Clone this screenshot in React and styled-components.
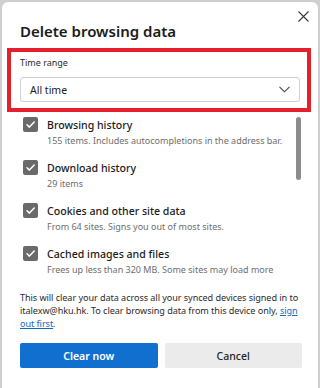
import React from 'react';
import styled, { createGlobalStyle } from 'styled-components';

const GlobalStyle = createGlobalStyle`
    html, body {
        margin: 0;
        padding: 0;
        background: #cfcfcf;
        font-family: "Noto Sans", "Liberation Sans", sans-serif;
    }
`;

const Dialog = styled.div`
    position: relative;
    box-sizing: border-box;
    width: 316px;
    height: 386px;
    margin: 2px 2px 0 2px;
    background: #ffffff;
    border-radius: 6px 6px 0 0;
    display: flex;
    flex-direction: column;
    color: #1b1b1b;
`;

const Header = styled.div`
    display: flex;
    justify-content: space-between;
    align-items: flex-start;
    padding: 0 7px 0 18px;
`;

const Title = styled.h1`
    margin: 18px 0 0 0;
    font-size: 15px;
    line-height: 22px;
    font-weight: 600;
    color: #1b1b1b;
`;

const CloseButton = styled.button`
    border: none;
    background: none;
    padding: 0;
    margin-top: 6px;
    width: 16px;
    height: 16px;
    display: flex;
    align-items: center;
    justify-content: center;
`;

const Highlight = styled.div`
    margin: 6px 7px 0 5px;
    border: 4px solid #e3202b;
    padding: 4px 7px 6px 9px;
    display: flex;
    flex-direction: column;
    gap: 7px;
`;

const FieldLabel = styled.div`
    font-size: 9px;
    line-height: 14px;
    color: #2a2a2a;
`;

const Select = styled.div`
    box-sizing: border-box;
    height: 25px;
    border: 1px solid #d1d1d1;
    border-radius: 3px;
    display: flex;
    align-items: center;
    justify-content: space-between;
    padding: 0 9px 0 9px;
    font-size: 10.5px;
    color: #1b1b1b;
`;

const ListArea = styled.div`
    position: relative;
    height: 171px;
    overflow: hidden;
    padding: 5px 0 0 21px;
    box-sizing: border-box;
    display: flex;
    flex-direction: column;
    gap: 12px;
`;

const Row = styled.div`
    display: flex;
    gap: 9px;
`;

const Box = styled.span`
    flex: none;
    width: 15px;
    height: 15px;
    border-radius: 2px;
    background: #6a6a6a;
    display: flex;
    align-items: center;
    justify-content: center;
`;

const RowText = styled.div`
    display: flex;
    flex-direction: column;
`;

const RowTitle = styled.div`
    font-size: 10.6px;
    line-height: 16px;
    font-weight: 500;
    color: #1b1b1b;
`;

const RowSub = styled.div`
    font-size: 9px;
    line-height: 15px;
    color: #6e6e6e;
    white-space: nowrap;
`;

const Thumb = styled.div`
    position: absolute;
    right: 17px;
    top: 5px;
    width: 5px;
    height: 63px;
    border-radius: 3px;
    background: #8c8c8c;
`;

const Notice = styled.p`
    margin: 8px 10px 0 18px;
    font-size: 9.1px;
    line-height: 13px;
    letter-spacing: -0.06px;
    white-space: nowrap;
    color: #2b2b2b;
`;

const Link = styled.a`
    color: #0f6cbd;
    text-decoration: underline;
`;

const Buttons = styled.div`
    display: grid;
    grid-template-columns: 1fr 1fr;
    gap: 7px;
    margin: 13px 16px 0 18px;
`;

const Button = styled.button`
    height: 25px;
    border: none;
    border-radius: 2px;
    font-family: inherit;
    font-size: 10.5px;
    background: ${p => p.$primary ? '#1170cf' : '#ebebeb'};
    color: ${p => p.$primary ? '#ffffff' : '#242424'};
    font-weight: ${p => p.$primary ? 600 : 500};
`;

const items = [
    { title: 'Browsing history', sub: '155 items. Includes autocompletions in the address bar.' },
    { title: 'Download history', sub: '29 items' },
    { title: 'Cookies and other site data', sub: 'From 64 sites. Signs you out of most sites.' },
    { title: 'Cached images and files', sub: 'Frees up less than 320 MB. Some sites may load more' },
];

const Check = () => (
    <svg width="11" height="11" viewBox="0 0 11 11">
        <path d="M2 5.8 L4.4 8.1 L9.2 3" fill="none" stroke="#fff" strokeWidth="1.5" strokeLinecap="round" strokeLinejoin="round" />
    </svg>
);

export default function App() {
    return (
        <>
            <GlobalStyle />
            <Dialog>
                <Header>
                    <Title>Delete browsing data</Title>
                    <CloseButton aria-label="Close">
                        <svg width="11" height="11" viewBox="0 0 11 11">
                            <path d="M0.5 0.5 L10.5 10.5 M10.5 0.5 L0.5 10.5" stroke="#3a3a3a" strokeWidth="1.1" />
                        </svg>
                    </CloseButton>
                </Header>
                <Highlight>
                    <FieldLabel>Time range</FieldLabel>
                    <Select>
                        <span>All time</span>
                        <svg width="11" height="7" viewBox="0 0 11 7">
                            <path d="M0.5 0.8 L5.5 5.8 L10.5 0.8" fill="none" stroke="#444" strokeWidth="1.1" />
                        </svg>
                    </Select>
                </Highlight>
                <ListArea>
                    {items.map(it => (
                        <Row key={it.title}>
                            <Box><Check /></Box>
                            <RowText>
                                <RowTitle>{it.title}</RowTitle>
                                <RowSub>{it.sub}</RowSub>
                            </RowText>
                        </Row>
                    ))}
                    <Thumb />
                </ListArea>
                <Notice>
                    This will clear your data across all your synced devices signed in to<br />
                    italexw@hku.hk. To clear browsing data from this device only, <Link href="#">sign<br />
                    out first</Link>.
                </Notice>
                <Buttons>
                    <Button $primary>Clear now</Button>
                    <Button>Cancel</Button>
                </Buttons>
            </Dialog>
        </>
    );
}
